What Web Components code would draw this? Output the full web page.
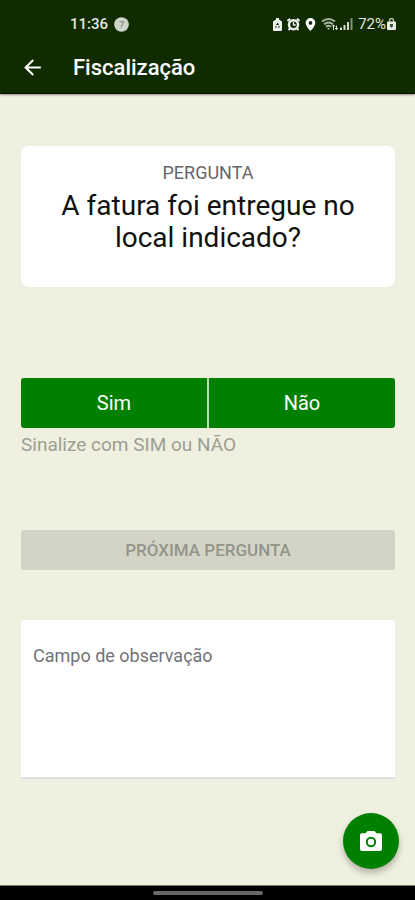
<!DOCTYPE html>
<html lang="pt-BR">
<head>
<meta charset="utf-8">
<meta name="viewport" content="width=device-width, initial-scale=1">
<title>Fiscalização</title>
<style>
  body { margin: 0; background: #f0f0e0; font-family: Roboto, "Liberation Sans", sans-serif; }
</style>
</head>
<body>
<inspection-app>
  <status-bar slot="top" time="11:36" battery="72%"></status-bar>
  <app-bar slot="top">Fiscalização</app-bar>
  <question-card label="Pergunta">A fatura foi entregue no local indicado?</question-card>
  <answer-choice hint="Sinalize com SIM ou NÃO"></answer-choice>
  <next-button>PRÓXIMA PERGUNTA</next-button>
  <note-field label="Campo de observação"></note-field>
  <camera-fab slot="fab"></camera-fab>
  <gesture-bar slot="bottom"></gesture-bar>
</inspection-app>

<script>
const define = (name, markup, setup) => customElements.define(name, class extends HTMLElement {
  constructor() {
    super();
    const t = document.createElement('template');
    t.innerHTML = '<style>:host,*{box-sizing:border-box}button,textarea{font-family:inherit;margin:0;border:0}svg{display:block}</style>' + markup;
    this.attachShadow({ mode: 'open' }).append(t.content.cloneNode(true));
  }
  connectedCallback() { if (setup) setup(this, this.shadowRoot); }
});

define('inspection-app', `
<style>
  :host { display: flex; flex-direction: column; min-height: 100vh; }
  header { background: #112b00; border-bottom: 1px solid #071500; box-shadow: 0 1px 2px #0006; }
  main { position: relative; flex: 1; display: flex; flex-direction: column; padding: 52px 20px 96px 21px; }
  ::slotted(answer-choice) { margin-top: 91px; }
  ::slotted(next-button) { margin-top: 74px; }
  ::slotted(note-field) { margin-top: 50px; }
  .fab { position: absolute; right: 16px; bottom: 16px; }
</style>
<header><slot name="top"></slot></header>
<main><slot></slot><div class="fab"><slot name="fab"></slot></div></main>
<slot name="bottom"></slot>`);

define('status-bar', `
<style>
  :host { display: flex; align-items: center; justify-content: space-between; height: 48px; padding: 0 19px 0 70px; color: #e2e6df; font-size: 15px; line-height: 20px; font-weight: 500; }
  div { display: flex; align-items: center; }
  .left { gap: 6px; }
  .icons { gap: 5px; }
  .signal { gap: 1px; }
  .power { gap: 1px; font-weight: 400; }
</style>
<div class="left"><span id="time"></span>
  <svg width="15" height="15" viewBox="0 0 15 15" aria-hidden="true"><circle cx="7.500" cy="7.500" r="7.300" fill="#cfd5ca"/><path d="M5.500 4.700h4L7 10.500" fill="none" stroke="#8f988a" stroke-width="1.300"/></svg>
</div>
<div class="icons">
  <svg width="9" height="13" viewBox="0 0 9 13" aria-hidden="true"><path d="M3 0h3v1.500l3 2V12q0 1-1 1H1q-1 0-1-1V3.500l3-2z" fill="#eef0ec"/><path d="M4.500 4.500L6 7H3zM2 9.500l1-2 1 2zM5 9.500l1-2 1 2z" fill="#112b00"/></svg>
  <svg width="13" height="13" viewBox="0 0 13 13" aria-hidden="true"><path d="M.5 3L3.200.8M12.500 3L9.800.8M3 10.500L1.500 12M10 10.500l1.500 1.500" stroke="#eef0ec" stroke-width="2"/><circle cx="6.500" cy="6.800" r="4.500" fill="#112b00" stroke="#eef0ec" stroke-width="2.500"/><path d="M6.500 4v3h2.300" fill="none" stroke="#eef0ec" stroke-width="1.300"/></svg>
  <svg width="11" height="13" viewBox="0 0 11 14" aria-hidden="true"><path fill-rule="evenodd" d="M5.500 0A5.200 5.200 0 0 0 .3 5.200C.3 9 5.500 14 5.500 14s5.200-5 5.200-8.800A5.200 5.200 0 0 0 5.500 0zm0 3.300a2 2 0 1 1 0 4 2 2 0 0 1 0-4z" fill="#fff"/></svg>
  <div class="signal">
    <svg width="18" height="13" viewBox="0 0 18 13" aria-hidden="true"><g fill="none" stroke="#a7b39f" stroke-width="1.900"><path d="M1 3.600Q7.500-1.500 14 3.600M3 6.300q4.500-3.500 9 0M5 8.700q2.500-2 5 0"/></g><path d="M6 10h3l-1.500 2z" fill="#a7b39f"/><path d="M12.500 12V7M10.800 8.700L12.500 7l1.700 1.700M15.500 7.500v4M14 10l1.500 1.700L17 10" fill="none" stroke="#dce1d8"/></svg>
    <svg width="13" height="12" viewBox="0 0 13 12" aria-hidden="true"><path d="M0 9.500h2V12H0zM3.500 7h2v5h-2zM7 4h2v8H7z" fill="#d4dacf"/><path d="M10.500 0h2v12h-2z" fill="#81907a"/></svg>
  </div>
  <div class="power"><span id="battery"></span>
    <svg width="9" height="12" viewBox="0 0 9 12" aria-hidden="true"><path d="M2.500 4V2.500a2 2 0 0 1 4 0V4" fill="none" stroke="#bcc5b7" stroke-width="1.300"/><rect y="3.500" width="9" height="8.500" rx="1" fill="#e8ebe5"/><path d="M3 6h3v2L4.500 10 3 8z" fill="#3a5130"/></svg>
  </div>
</div>`, (el, root) => {
  root.getElementById('time').textContent = el.getAttribute('time');
  root.getElementById('battery').textContent = el.getAttribute('battery');
});

define('app-bar', `
<style>
  :host { display: flex; align-items: center; gap: 28px; height: 45px; padding: 0 20px 6px; color: #fff; }
  button { width: 25px; height: 25px; padding: 0; background: none; color: inherit; }
  h1 { margin: 0; font-size: 22px; line-height: 28px; font-weight: 500; }
</style>
<button type="button" aria-label="Voltar"><svg width="25" height="25" viewBox="0 0 24 24" fill="currentColor"><path d="M20 11H7.830l5.590-5.590L12 4l-8 8 8 8 1.410-1.410L7.830 13H20z"/></svg></button>
<h1><slot></slot></h1>`);

define('question-card', `
<style>
  :host { display: block; background: #fff; border-radius: 8px; padding: 16px 24px 31px; text-align: center; }
  p { margin: 0; font-size: 18px; line-height: 22px; color: #666; text-transform: uppercase; }
  h2 { margin: 4px auto 0; max-width: 312px; font-size: 28px; line-height: 32px; padding: 2px 0; font-weight: 400; color: #111; }
</style>
<p></p><h2><slot></slot></h2>`, (el, root) => { root.querySelector('p').textContent = el.getAttribute('label'); });

define('answer-choice', `
<style>
  :host { display: block; }
  div { display: flex; gap: 2px; background: #bfdab4; border-radius: 3px; overflow: hidden; }
  button { flex: 1; height: 50px; background: #008000; color: #fff; font-size: 20px; line-height: 24px; font-weight: 400; }
  p { margin: 6px 0 0; font-size: 19px; line-height: 22px; color: #9d9e93; }
</style>
<div role="group" aria-describedby="hint"><button type="button">Sim</button><button type="button">Não</button></div>
<p id="hint"></p>`, (el, root) => { root.querySelector('p').textContent = el.getAttribute('hint'); });

define('next-button', `
<style>
  :host { display: block; }
  button { display: block; width: 100%; height: 40px; border-radius: 3px; background: #d4d4c6; color: #93948a; font-size: 17px; line-height: 20px; font-weight: 500; }
</style>
<button type="button" disabled><slot></slot></button>`);

define('note-field', `
<style>
  :host { display: block; }
  textarea { display: block; width: 100%; height: 159px; padding: 25px 12px; resize: none; outline: 0; background: #fff; border-bottom: 2px solid #dcdddc; border-radius: 4px 4px 0 0; color: #222; font-size: 18px; line-height: 22px; }
  textarea::placeholder { color: #737373; opacity: 1; }
</style>
<textarea></textarea>`, (el, root) => {
  const field = root.querySelector('textarea');
  field.placeholder = el.getAttribute('label');
  field.setAttribute('aria-label', el.getAttribute('label'));
});

define('camera-fab', `
<style>
  :host { display: block; }
  button { display: grid; place-items: center; width: 56px; height: 56px; padding: 0; border-radius: 50%; background: #008000; box-shadow: 0 4px 6px #0004; }
</style>
<button type="button" aria-label="Tirar foto"><svg width="22" height="20" viewBox="0 0 22 20"><path d="M7.500 0h7l2 2.300H20q2 0 2 2V18q0 2-2 2H2q-2 0-2-2V4.300q0-2 2-2h3.500z" fill="#fff"/><circle cx="11" cy="11" r="4.200" fill="none" stroke="#008000" stroke-width="2"/></svg></button>`);

define('gesture-bar', `
<style>
  :host { display: flex; justify-content: center; align-items: center; height: 15px; background: #000; border-top: 1px solid #77776f; }
  span { width: 110px; height: 4px; border-radius: 2px; background: #666; }
</style>
<span></span>`);
</script>
</body>
</html>
